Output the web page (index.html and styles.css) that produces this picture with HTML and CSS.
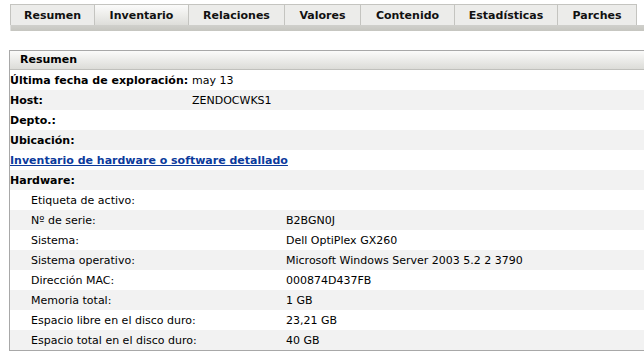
FILE: index.html
```html
<!DOCTYPE html>
<html lang="es">
<head>
<meta charset="utf-8">
<title>Inventario</title>
<link rel="stylesheet" href="styles.css">
</head>
<body>
<div class="tabs">
  <div class="tab t1">Resumen</div>
  <div class="tab t2 active">Inventario</div>
  <div class="tab t3">Relaciones</div>
  <div class="tab t4">Valores</div>
  <div class="tab t5">Contenido</div>
  <div class="tab t6">Estadísticas</div>
  <div class="tab t7">Parches</div>
</div>
<div class="tabbar"></div>

<div class="panel">
  <div class="phead">Resumen</div>
  <div class="row"><span class="lab">Última fecha de exploración:</span><span class="val">may 13</span></div>
  <div class="row alt"><span class="lab">Host:</span><span class="val">ZENDOCWKS1</span></div>
  <div class="row"><span class="lab">Depto.:</span></div>
  <div class="row alt"><span class="lab">Ubicación:</span></div>
  <div class="row"><a class="link" href="#">Inventario de hardware o software detallado</a></div>
  <div class="row alt"><span class="lab">Hardware:</span></div>
  <div class="row sub"><span class="slab">Etiqueta de activo:</span><span class="sval"></span></div>
  <div class="row sub alt"><span class="slab">Nº de serie:</span><span class="sval">B2BGN0J</span></div>
  <div class="row sub"><span class="slab">Sistema:</span><span class="sval">Dell OptiPlex GX260</span></div>
  <div class="row sub alt"><span class="slab">Sistema operativo:</span><span class="sval">Microsoft Windows Server 2003 5.2 2 3790</span></div>
  <div class="row sub"><span class="slab">Dirección MAC:</span><span class="sval">000874D437FB</span></div>
  <div class="row sub alt"><span class="slab">Memoria total:</span><span class="sval">1 GB</span></div>
  <div class="row sub"><span class="slab">Espacio libre en el disco duro:</span><span class="sval">23,21 GB</span></div>
  <div class="row sub alt"><span class="slab">Espacio total en el disco duro:</span><span class="sval">40 GB</span></div>
</div>
</body>
</html>
```

FILE: styles.css
```css
html, body {
  margin: 0;
  padding: 0;
  background: #ffffff;
  overflow: hidden;
}
body {
  font-family: "DejaVu Sans", sans-serif;
  font-size: 11px;
  color: #000;
  width: 644px;
}
.tabs {
  display: flex;
  margin: 4px 0 0 10px;
  height: 21px;
}
.tab {
  box-sizing: border-box;
  height: 21px;
  display: flex;
  align-items: center;
  justify-content: center;
  font-weight: bold;
  background: #ececea;
  border: 1px solid #c4c4c0;
  border-bottom: none;
  border-left: none;
  color: #111;
}
.tab.t1 { width: 85px; border-left: 1px solid #c4c4c0; }
.tab.t2 { width: 94px; }
.tab.t3 { width: 96px; }
.tab.t4 { width: 76px; }
.tab.t5 { width: 94px; }
.tab.t6 { width: 103px; }
.tab.t7 { width: 79px; }
.tab.active {
  background: linear-gradient(#fbfbfa, #dededa);
}
.tabbar {
  height: 6px;
  margin-left: 10px;
  background: linear-gradient(#d0d0cc, #c6c6c0);
  border-left: 1px solid #e0e0de;
}
.panel {
  margin: 19px 0 0 9px;
  width: 660px;
  border: 1px solid #a8a8a8;
  border-right: none;
}
.phead {
  height: 18px;
  line-height: 18px;
  padding-left: 10px;
  font-weight: bold;
  background: linear-gradient(#fbfbfa, #dcdcd8);
  border-bottom: 1px solid #c0c0bc;
}
.row {
  display: flex;
  height: 20px;
  align-items: center;
  background: #ffffff;
}
.row.alt { background: #f2f2f2; }
.lab {
  font-weight: bold;
  width: 182px;
  flex: none;
  white-space: nowrap;
}
.val { white-space: nowrap; }
.link {
  color: #0b3a9c;
  font-weight: bold;
  text-decoration: underline;
}
.slab {
  padding-left: 21px;
  width: 255px;
  flex: none;
  white-space: nowrap;
}
.sval { white-space: nowrap; }
```
